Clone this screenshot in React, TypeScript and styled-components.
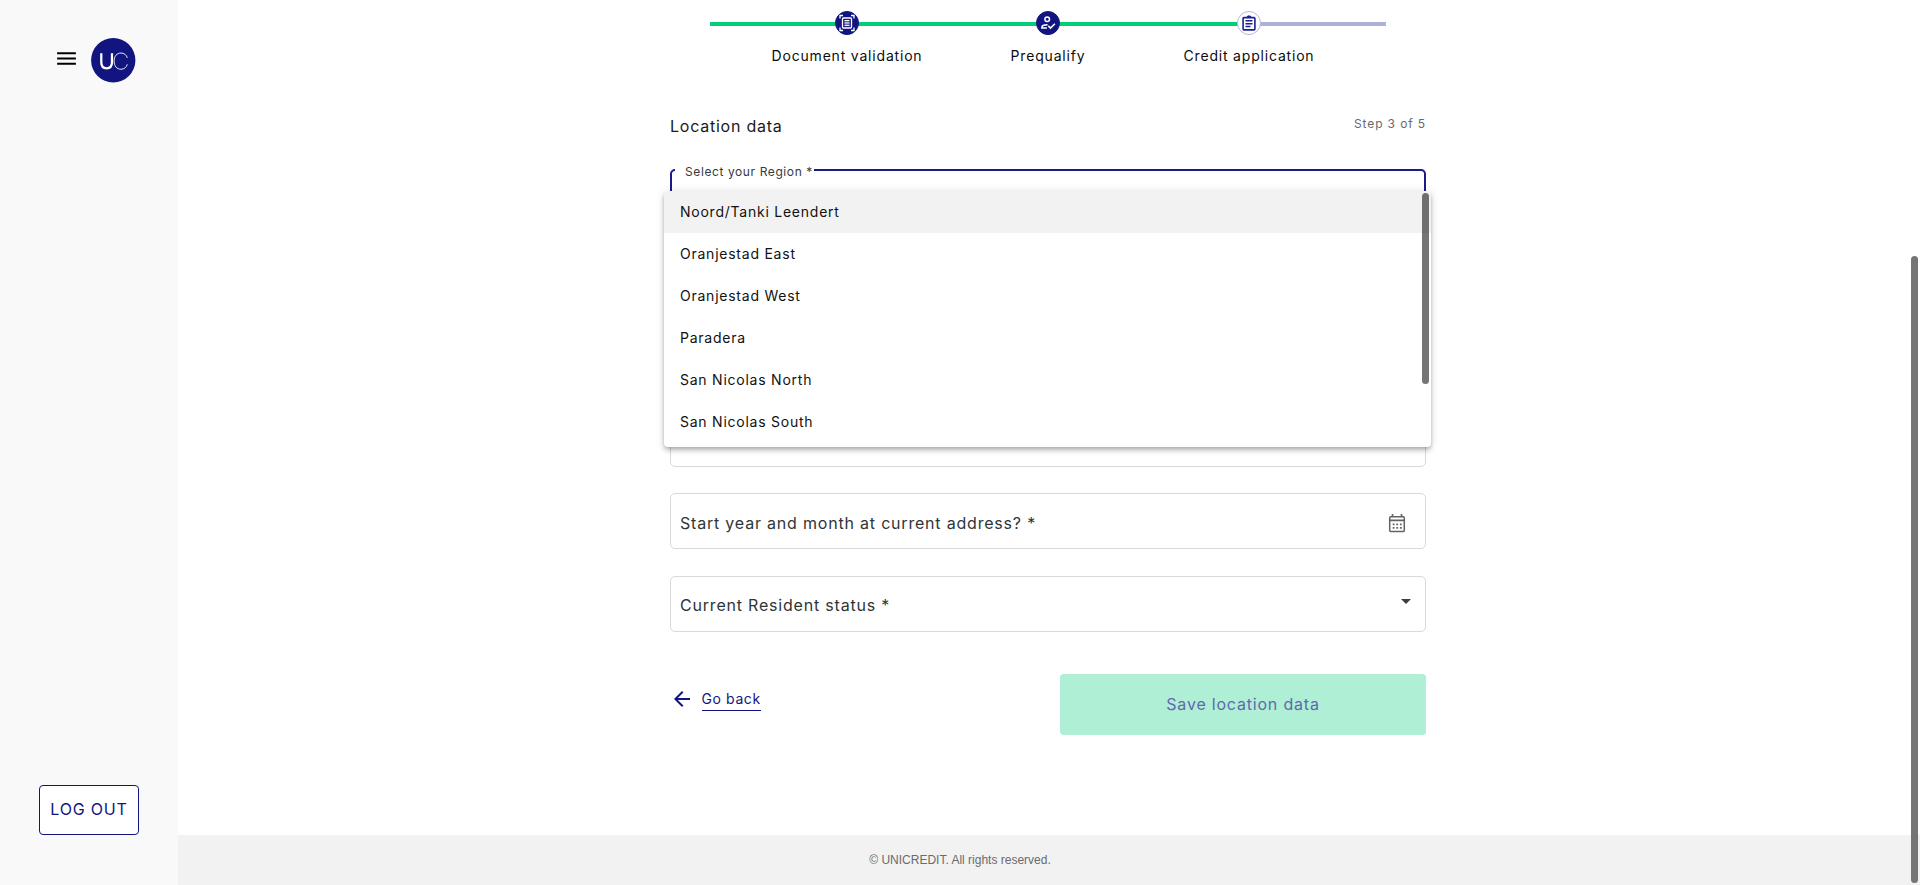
import React from "react";
import styled, { createGlobalStyle } from "styled-components";

const GlobalStyle = createGlobalStyle`
  *, *::before, *::after { box-sizing: border-box; }
  body {
    margin: 0;
    overflow: hidden;
    background: #fff;
    font-family: Inter, "Liberation Sans", sans-serif;
    color: #1a1a1a;
  }
`;

const navy = "#12157f";

const Shell = styled.div`
  position: relative;
  display: flex;
  height: 885px;
  overflow: hidden;
`;

const Sidebar = styled.aside`
  width: 178px;
  flex: none;
  display: flex;
  flex-direction: column;
  justify-content: space-between;
  background: #f9f9f9;
  padding: 38px 39px 50px;
`;

const Brand = styled.div`
  display: flex;
  align-items: flex-start;
  gap: 12px;
  margin-left: 15px;
  height: 44px;
  svg { flex: none; display: block; }
  svg:first-child { margin-top: 8px; }
`;

const LogoutButton = styled.button`
  width: 100px;
  height: 50px;
  padding: 0 0 2px;
  border: 1px solid ${navy};
  border-radius: 4px;
  background: #fff;
  color: ${navy};
  font: 400 16px Inter, sans-serif;
  letter-spacing: 0.8px;
  white-space: nowrap;
`;

const Main = styled.main`
  flex: 1;
  display: flex;
  flex-direction: column;
`;

const Content = styled.div`
  flex: 1;
  width: 756px;
  margin-left: 492px;
`;

const Stepper = styled.ol`
  list-style: none;
  width: 676px;
  margin: 0 40px;
  padding: 11px 36.5px 0;
  display: flex;
  background: linear-gradient(90deg, #02ce75 527px, #aeb0d6 527px) 0 22px / 676px 4px no-repeat;
`;

const Step = styled.li`
  width: 201px;
  display: flex;
  flex-direction: column;
  align-items: center;
  gap: 12px;
`;

const StepDot = styled.span<{ $active?: boolean }>`
  width: 24px;
  height: 24px;
  border-radius: 50%;
  display: flex;
  align-items: center;
  justify-content: center;
  background: ${(p) => (p.$active ? "#fff" : navy)};
  border: 1px solid ${(p) => (p.$active ? "#b3b5da" : navy)};
  color: ${(p) => (p.$active ? "#1d1f93" : "#fff")};
`;

const StepLabel = styled.span`
  font-size: 14px;
  line-height: 18px;
  letter-spacing: 0.81px;
  color: #0c0c0c;
  white-space: nowrap;
`;

const Heading = styled.div`
  display: flex;
  justify-content: space-between;
  margin-top: 51px;
  height: 45px;
`;

const Title = styled.h1`
  margin: 0;
  font-size: 16px;
  font-weight: 400;
  line-height: 20px;
  letter-spacing: 0.76px;
`;

const StepCount = styled.span`
  font-size: 12px;
  line-height: 16px;
  letter-spacing: 0.88px;
  color: #6a6a6a;
`;

const Fields = styled.div`
  position: relative;
  display: flex;
  flex-direction: column;
  gap: 27px;
`;

const OpenSelect = styled.fieldset`
  height: 71px;
  margin: 0 0 152px;
  padding: 0 0 0 3px;
  border: 2px solid #1a1c85;
  border-radius: 5px;
  min-width: 0;
`;

const FloatingLabel = styled.legend`
  height: 18px;
  padding: 4px 1px 0 10px;
  font-size: 12px;
  line-height: 14px;
  letter-spacing: 0.6px;
  color: #363a3c;
  white-space: nowrap;
`;

const Field = styled.div<{ $tight?: boolean; $textTop?: number }>`
  height: 56px;
  display: flex;
  align-items: center;
  justify-content: space-between;
  padding: ${(p) => p.$textTop ?? 4}px 14px 0 9px;
  margin-bottom: ${(p) => (p.$tight ? -1 : 0)}px;
  border: 1px solid #d9d9d9;
  border-radius: 5px;
  font-size: 16px;
  letter-spacing: 0.8px;
  color: #2f3537;
`;

const Menu = styled.ul`
  position: absolute;
  left: -6px;
  top: 30px;
  width: 767px;
  height: 256px;
  margin: 0;
  padding: 0;
  list-style: none;
  overflow: hidden;
  background: #fff;
  border-radius: 4px;
  box-shadow: 0 2px 4px -1px rgba(0, 0, 0, 0.2), 0 4px 5px 0 rgba(0, 0, 0, 0.14), 0 1px 10px 0 rgba(0, 0, 0, 0.12);
`;

const Option = styled.li<{ $current?: boolean }>`
  height: 42px;
  padding: 0 16px;
  line-height: 42px;
  font-size: 14px;
  letter-spacing: 0.76px;
  color: #111;
  background: ${(p) => (p.$current ? "#f2f2f2" : "transparent")};
`;

const MenuThumb = styled.span`
  position: absolute;
  top: 2px;
  right: 2px;
  width: 7px;
  height: 191px;
  border-radius: 4px;
  background: rgba(0, 0, 0, 0.54);
`;

const PageThumb = styled.span`
  position: absolute;
  top: 256px;
  right: 2px;
  width: 7px;
  height: 627px;
  border-radius: 4px;
  background: #757575;
`;

const Actions = styled.div`
  display: flex;
  justify-content: space-between;
  margin-top: 42px;
`;

const BackLink = styled.a`
  display: flex;
  align-items: flex-start;
  gap: 7.5px;
  padding-top: 13px;
  color: ${navy};
`;

const BackText = styled.span`
  margin-top: 3px;
  height: 21px;
  line-height: 18px;
  font-size: 14px;
  letter-spacing: 0.6px;
  border-bottom: 1px solid ${navy};
`;

const SaveButton = styled.button`
  width: 366px;
  height: 61px;
  padding: 0 0 2px;
  border: 0;
  border-radius: 4px;
  background: #aeefd5;
  color: #6268ae;
  font: 400 16px Inter, sans-serif;
  letter-spacing: 0.8px;
`;

const Footer = styled.footer`
  height: 50px;
  display: flex;
  align-items: center;
  justify-content: center;
  padding-right: 178px;
  background: #f2f2f2;
  color: #6b6b6b;
  font: 12px "Liberation Sans", Arial, sans-serif;
`;

const MenuIcon = () => (
  <svg width="25" height="25" viewBox="0 0 24 24" fill="#000">
    <path d="M3 18h18v-2H3v2zm0-5h18v-2H3v2zm0-7v2h18V6H3z" />
  </svg>
);

const Logo = () => (
  <svg width="44.500" height="44.500" viewBox="0 0 45 45">
    <circle cx="22.5" cy="22.5" r="22.4" fill={navy} />
    <path d="M10.4 15.4v9.200c0 4 2 6.100 5.400 6.100s5.400-2.100 5.400-6.100v-9.200" fill="none" stroke="#fff" strokeWidth="2.300" />
    <path d="M36.700 20.200c-.7-3-3.100-5-6.400-5-4.200 0-6.900 3.200-6.900 8.200s2.700 8.200 6.900 8.200c3.300 0 5.700-2 6.400-5" fill="none" stroke="#fff" strokeWidth=".9" />
  </svg>
);

const ScanIcon = () => (
  <svg width="16" height="18" viewBox="0 0 16 18" fill="none" stroke="currentColor">
    <path d="M1 4.500V1.500h3M12 1.500h3v3M15 13.500v3h-3M4 16.500H1v-3" strokeWidth="1.300" />
    <rect x="3.500" y="4" width="9" height="10" rx="1" strokeWidth="1.300" />
    <path d="M5.500 6.500h5M5.500 8.200h5M5.500 9.900h5M5.500 11.600h5" strokeWidth="1" />
  </svg>
);

const PersonCheckIcon = () => (
  <svg width="16" height="16" viewBox="0 0 16 16" fill="none" stroke="currentColor" strokeWidth="1.500">
    <circle cx="7.200" cy="4.300" r="2.300" />
    <path d="M7.600 9.800C4.200 9.800 1.900 11 1.900 12.200v.9h5" />
    <path d="M8.300 10.900l2.200 2.200 4.400-4.400" />
  </svg>
);

const ClipboardIcon = () => (
  <svg width="14" height="16" viewBox="0 0 14 16" fill="none" stroke="currentColor">
    <rect x="1.100" y="2.600" width="11.800" height="12.300" rx=".8" strokeWidth="1.600" />
    <path d="M4.600 2.200C5 .9 6 .6 7 .6s2 .3 2.400 1.600z" fill="currentColor" stroke="none" />
    <path d="M3.500 5.800h7M3.500 8.700h7M3.500 11.600h5" strokeWidth="1.500" />
  </svg>
);

const CalendarIcon = () => (
  <svg width="18" height="19" viewBox="0 0 18 19" fill="none" stroke="#636363">
    <rect x="1.700" y="2.700" width="14.600" height="14.800" rx="1" strokeWidth="1.500" />
    <path d="M1.700 6.300h14.600M4.500 0v3M13.500 0v3" strokeWidth="1.700" />
    <path d="M4.700 10.300h9M4.700 13.800h9" strokeWidth="1.700" strokeDasharray="1.800 1.800" />
  </svg>
);

const CaretIcon = () => (
  <svg width="10" height="5" viewBox="0 0 10 5" fill="#36403c">
    <path d="M0 0h10L5 5z" />
  </svg>
);

const IconSlot = styled.span<{ $right: number; $lift: number }>`
  display: flex;
  margin: 0 ${(p) => p.$right}px ${(p) => p.$lift}px 0;
`;

const BackIcon = () => (
  <svg width="24" height="24" viewBox="0 0 24 24" fill={navy}>
    <path d="M20 11H7.830l5.590-5.590L12 4l-8 8 8 8 1.410-1.410L7.830 13H20v-2z" />
  </svg>
);

const steps = [
  { label: "Document validation", icon: <ScanIcon /> },
  { label: "Prequalify", icon: <PersonCheckIcon /> },
  { label: "Credit application", icon: <ClipboardIcon />, active: true },
];

const regions = [
  "Noord/Tanki Leendert",
  "Oranjestad East",
  "Oranjestad West",
  "Paradera",
  "San Nicolas North",
  "San Nicolas South",
];

export default function App() {
  return (
    <Shell>
      <GlobalStyle />
      <Sidebar>
        <Brand>
          <MenuIcon />
          <Logo />
        </Brand>
        <LogoutButton>LOG OUT</LogoutButton>
      </Sidebar>
      <Main>
        <Content>
          <Stepper>
            {steps.map((s) => (
              <Step key={s.label}>
                <StepDot $active={s.active}>{s.icon}</StepDot>
                <StepLabel>{s.label}</StepLabel>
              </Step>
            ))}
          </Stepper>
          <Heading>
            <Title>Location data</Title>
            <StepCount>Step 3 of 5</StepCount>
          </Heading>
          <Fields>
            <OpenSelect>
              <FloatingLabel>Select your Region *</FloatingLabel>
            </OpenSelect>
            <Field $tight />
            <Field>
              Start year and month at current address? *
              <IconSlot $right={5} $lift={0}>
                <CalendarIcon />
              </IconSlot>
            </Field>
            <Field $textTop={2}>
              Current Resident status *
              <IconSlot $right={0} $lift={7}>
                <CaretIcon />
              </IconSlot>
            </Field>
            <Menu>
              {regions.map((r, i) => (
                <Option key={r} $current={i === 0}>
                  {r}
                </Option>
              ))}
              <MenuThumb />
            </Menu>
          </Fields>
          <Actions>
            <BackLink>
              <BackIcon />
              <BackText>Go back</BackText>
            </BackLink>
            <SaveButton>Save location data</SaveButton>
          </Actions>
        </Content>
        <Footer>© UNICREDIT. All rights reserved.</Footer>
      </Main>
      <PageThumb />
    </Shell>
  );
}
